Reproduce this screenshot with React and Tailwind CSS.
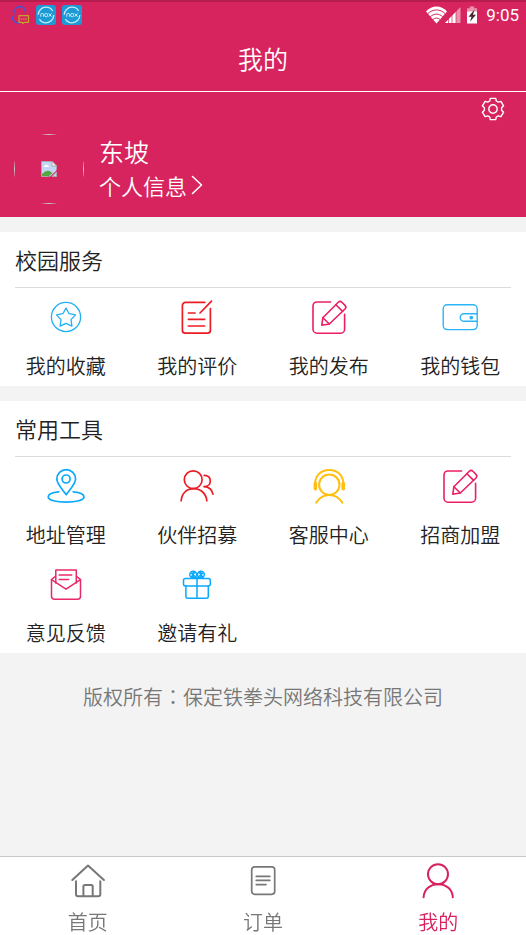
import React, { useState } from "react";

const line = {
    fill: "none",
    stroke: "currentColor",
    strokeLinecap: "round",
    strokeLinejoin: "round",
}

const Icon = ({ width = 1.6, children }) => (
    <svg viewBox="0 0 40 40" className="size-10" aria-hidden="true" {...line} strokeWidth={width}>{children}</svg>
)

const StarIcon = () => (
    <Icon width={1.3}>
        <circle cx="20" cy="20" r="14.6" />
        <path d="M20 11l3.1 5.7 6.4 1.2-4.5 4.7.9 6.5-5.9-2.8-5.9 2.8.9-6.5-4.5-4.7 6.4-1.2z" />
    </Icon>
)

const ReviewIcon = () => (
    <Icon width={1.7}>
        <path d="M27.8 5.4H8.4a3 3 0 0 0-3 3v24.8a3 3 0 0 0 3 3h22a3 3 0 0 0 3-3V11.6" />
        <path d="M34.5 4.2L23 16M11.4 16H18M11.4 22.3h16.2M11.4 29h16.2" />
    </Icon>
)

const EditIcon = () => (
    <Icon>
        <path d="M21.6 5H8a4 4 0 0 0-4 4v23.2a4 4 0 0 0 4 4h23.6a4 4 0 0 0 4-4V17.4" />
        <path d="M12.8 28.2l1.1-7.5L29.3 5.3q1.8-1.8 3.6 0l3.1 3.1q1.8 1.8 0 3.6L20.3 27z" />
        <path d="M13.9 20.7l6.4 6.3M26.9 7.7l6.7 6.7" />
    </Icon>
)

const WalletIcon = () => (
    <Icon width={1.4}>
        <rect x="3.2" y="7.8" width="34" height="24.8" rx="4" />
        <path d="M37.2 16.7H24a3.8 3.8 0 0 0 0 7.6h13.2" />
        <circle cx="31.3" cy="20.6" r="1.2" fill="currentColor" />
    </Icon>
)

const AddressIcon = () => (
    <Icon width={1.7}>
        <path d="M20.2 28.7C17 24 10.8 18 10.8 13a9.4 9.4 0 0 1 18.8 0c0 5-6.2 11-9.4 15.7z" />
        <circle cx="20.1" cy="13" r="4" />
        <path d="M12.7 25.8C6 26.4 2.2 28.5 2.2 31c0 3.1 8 5.2 17.9 5.2S38 34.1 38 31c0-2.5-4-4.6-10.7-5.2" />
    </Icon>
)

const PartnerIcon = () => (
    <Icon width={1.7}>
        <circle cx="16.2" cy="13.7" r="8.9" />
        <path d="M4.2 34.8c.4-7.2 5.3-12.2 12.4-12.2s12.7 5 13.2 12.2" />
        <path d="M27.2 9.3c3.7.1 6.1 2.3 6.1 5.6s-2.5 5.7-6.3 5.8c4.9.3 8.1 3 9 7.4" />
    </Icon>
)

const ServiceIcon = () => (
    <Icon width={2}>
        <path d="M6 18.5C6 9.5 12 4 20.3 4s14.2 5.5 14.2 14.5" />
        <path d="M6.4 17.6v5.2M34.2 17.6v5.2" strokeWidth="3.6" />
        <circle cx="20.3" cy="18.7" r="10.2" />
        <path d="M7.2 36.6c3.2-4.7 7.8-7.5 13.1-7.5s9.9 2.8 13.1 7.5" />
    </Icon>
)

const FeedbackIcon = () => (
    <Icon width={1.5}>
        <path d="M9.8 19V5.9h20.5V19" />
        <path d="M9.5 12.2l-4 3.4v16.7a3 3 0 0 0 3 3h23a3 3 0 0 0 3-3V15.6l-4-3.4" />
        <path d="M5.5 15.6L20 25.2l14.5-9.6M13.2 11h12.5M13.2 15.6h9.4" />
    </Icon>
)

const GiftIcon = () => (
    <Icon width={1.5}>
        <rect x="6.5" y="14.5" width="26.8" height="7.4" rx="1.8" />
        <path d="M8.9 21.9v10.3a2 2 0 0 0 2 2h18.4a2 2 0 0 0 2-2V21.9M20 14.5v19.7" />
        <circle cx="16.2" cy="10.6" r="3.4" />
        <circle cx="23.9" cy="10.6" r="3.4" />
        <path d="M14.2 9l5.6 5M17.5 8.5l-3 4.5M25.9 9l-5.7 5M22.5 8.5l3 4.5M16.2 7.5v6M23.9 7.5v6" />
    </Icon>
)

const HomeIcon = () => (
    <Icon width={2}>
        <path d="M4.3 19L20 4.5 35.9 19" />
        <path d="M8 20.3v12.9a2 2 0 0 0 2 2h20.3a2 2 0 0 0 2-2V20.3" />
        <path d="M15.4 35v-9.6a1.5 1.5 0 0 1 1.5-1.5h6.3a1.5 1.5 0 0 1 1.5 1.5V35" />
    </Icon>
)

const OrderIcon = () => (
    <Icon width={1.7}>
        <rect x="8.7" y="5.8" width="23" height="27.5" rx="3" />
        <path d="M13.3 15.4h13.5M13.3 19.4h13.5M13.3 23.6h9.7" />
    </Icon>
)

const UserIcon = () => (
    <Icon width={2}>
        <circle cx="20" cy="13.2" r="10" />
        <path d="M5.6 36.2C6 28.5 12 23.2 20.2 23.2s14.2 5.3 14.6 13" />
    </Icon>
)

const GearIcon = () => (
    <svg viewBox="-12 -12 24 24" className="size-6" aria-hidden="true" {...line} strokeWidth="1.4">
        <path d="M-2.7-10.6h5.4l.6 2.6 2 1.14 2.6-.8 2.7 4.5-2 2.02v2.28l2 2.02-2.7 4.5-2.6-.8-2 1.14-.6 2.6h-5.4l-.6-2.6-2-1.14-2.6.8-2.7-4.5 2-2.02v-2.28l-2-2.02 2.7-4.5 2.6.8 2-1.14z" />
        <circle r="4.2" />
    </svg>
)

const QQIcon = () => (
    <svg viewBox="0 0 20 20" className="size-5" aria-hidden="true" {...line} strokeWidth="1.3">
        <path d="M4.5 16c-2.5-1-2.5-3.5-.8-6C3.5 4.5 6.5 1.5 10 1.5s5.6 3 5.6 7M4.5 16c.5 1.3 2 2 4 2" stroke="#3f57d8" />
        <path d="M9 10.7h9.5v6.6h-4l-1.7 1.3-.6-1.3H9z" stroke="#c4a02c" />
        <path d="M11.4 14h.1M13.8 14h.1M16.1 14h.1" stroke="#c4a02c" strokeWidth="1.5" />
    </svg>
)

const NoxIcon = () => (
    <svg viewBox="0 0 20 20" className="size-5" aria-hidden="true">
        <rect width="20" height="20" rx="3" fill="#1b9ad6" />
        <circle cx="10" cy="10" r="7.8" fill="none" stroke="#c5ebfa" strokeWidth="1.3" strokeDasharray="20 4.5" />
        <path d="M4.8 11.7V9.5q0-1 1-1h.8q1 0 1 1v2.2M12.7 8.5l2.8 3.2M15.5 8.5l-2.8 3.2" fill="none" stroke="#fff" strokeWidth=".8" />
        <rect x="8.8" y="8.5" width="2.7" height="3.2" rx="1" fill="none" stroke="#fff" strokeWidth=".8" />
    </svg>
)

const SignalIcons = () => (
    <svg viewBox="0 0 54 20" className="h-5 w-[54px]" aria-hidden="true">
        <path d="M0 6.5C6-.2 15-.2 21 6.500L10.5 18.5z" fill="#fff" />
        <path d="M1.8 8.700c5-5 12.4-5 17.4 0M4.3 11.7c3.6-3.4 8.8-3.4 12.4 0M6.9 14.5c2.2-1.9 5-1.9 7.2 0" fill="none" stroke="#d7245e" />
        <path d="M19 18l15.5-16v16z" fill="#e992ae" />
        <path d="M19 18l11-11.3V18z" fill="#fff" />
        <path d="M22.5 12v6M26 8v10M30 5v13" stroke="#d7245e" strokeWidth=".7" />
        <path d="M41 3.2h2.8V1.5h4.4v1.7H51V7H41z" fill="#e992ae" />
        <path d="M41 6.5h10v12H41z" fill="#fff" />
        <path d="M48.5 4.5l-6 7.2h3l-1.5 5 6-7h-3z" fill="#4a2734" />
    </svg>
)

const BrokenImage = () => (
    <svg viewBox="0 0 16 16" className="size-4" role="img" aria-label="头像">
        <path d="M.5.5H11L15.5 5v4.5L9 15.5H.5z" fill="#c3d6f5" />
        <path d="M2.5 6q.3-1.5 1.7-1.5Q5.2 2.5 6.7 4.2 8 4.5 8 6z" fill="#fff" />
        <path d="M1 15.5V13q4.500-4.500 7.500-3l3 2-4 3.500z" fill="#53a93f" />
        <path d="M7 15.5H.5V.5H11L15.5 5v3" fill="none" stroke="#a9a9a9" />
        <path d="M11 .5V5h4.5z" fill="#fff" stroke="#a9a9a9" />
        <path d="M15.5 11v4.5H11z" fill="#c3d6f5" stroke="#a9a9a9" />
    </svg>
)

const campus = [
    { name: "我的收藏", icon: StarIcon, color: "text-[#1fb0f5]" },
    { name: "我的评价", icon: ReviewIcon, color: "text-[#ec1c24]" },
    { name: "我的发布", icon: EditIcon, color: "text-[#ec1e66]" },
    { name: "我的钱包", icon: WalletIcon, color: "text-[#2bb5f6]" },
]

const tools = [
    { name: "地址管理", icon: AddressIcon, color: "text-[#0aa9fb]" },
    { name: "伙伴招募", icon: PartnerIcon, color: "text-[#ec1c24]" },
    { name: "客服中心", icon: ServiceIcon, color: "text-[#ffbf0f]" },
    { name: "招商加盟", icon: EditIcon, color: "text-[#ec1e66]" },
    { name: "意见反馈", icon: FeedbackIcon, color: "text-[#ea2a68]" },
    { name: "邀请有礼", icon: GiftIcon, color: "text-[#0aa9fb]" },
]

const tabs = [
    { name: "首页", icon: HomeIcon },
    { name: "订单", icon: OrderIcon },
    { name: "我的", icon: UserIcon },
]

const Section = ({ title, items }) => (
    <section className="mt-[15px] bg-white">
        <h2 className="mx-[15px] h-14 border-b border-[#dcdcdc] text-[22px] leading-[54px] font-[350]">{title}</h2>
        <div className="grid grid-cols-4">
            {
                items.map(({ name, icon: ItemIcon, color }) => (
                    <a key={name} href="#" className="flex flex-col items-center pt-[9px] pb-2">
                        <span className={color}><ItemIcon /></span>
                        <span className="mt-[17px] text-[20px] leading-6">{name}</span>
                    </a>
                ))
            }
        </div>
    </section>
)

const App = () => {

    const [tab, setTab] = useState("我的")

    return (
        <div className="flex min-h-screen flex-col bg-[#f3f3f3] font-['Noto_Sans_CJK_SC',sans-serif] font-[350] text-[#222]">
            <header className="border-b border-white bg-[#d7245e] text-white">
                <div className="flex h-7 items-center justify-between border-t-2 border-[#b51d4e] pr-[7px] pl-[10px]">
                    <div className="flex items-center gap-[6px]">
                        <QQIcon />
                        <NoxIcon />
                        <NoxIcon />
                    </div>
                    <div className="flex items-center gap-[6px]">
                        <SignalIcons />
                        <span className="font-[Roboto,sans-serif] text-[17px] leading-6 font-normal">9:05</span>
                    </div>
                </div>
                <h1 className="h-[63px] text-center text-[25px] leading-[61px] font-[350]">我的</h1>
            </header>

            <div className="bg-[#d7245e] pb-[13px] text-white">
                <div className="flex h-[42px] justify-end pt-[5px] pr-[21px]">
                    <button type="button" aria-label="设置" className="size-6"><GearIcon /></button>
                </div>
                <div className="flex items-center gap-[15px] px-[14px]">
                    <div className="size-[70px] overflow-hidden rounded-full">
                        <div className="flex size-full items-center justify-center border border-[#c8c8c8]">
                            <BrokenImage />
                        </div>
                    </div>
                    <div className="pb-[2px]">
                        <p className="text-[25px] leading-[34px]">东坡</p>
                        <a href="#" className="flex items-center gap-1 text-[22px] leading-[34px]">
                            个人信息
                            <svg viewBox="0 0 12 20" className="h-5 w-3" aria-hidden="true" {...line} strokeWidth="1.6">
                                <path d="M1.5 1.5l9 8.5-9 8.5" />
                            </svg>
                        </a>
                    </div>
                </div>
            </div>

            <Section title="校园服务" items={campus} />
            <Section title="常用工具" items={tools} />

            <p className="py-7 text-center text-[20px] leading-8 text-[#777]">
                版权所有<span className="font-['Noto_Sans_CJK_TC',sans-serif]">：</span>保定铁拳头网络科技有限公司
            </p>

            <nav className="sticky bottom-0 mt-auto grid grid-cols-3 border-t border-[#c8c8c8] bg-white">
                {
                    tabs.map(({ name, icon: TabIcon }) => (
                        <button
                            key={name}
                            type="button"
                            onClick={() => setTab(name)}
                            className={"flex flex-col items-center pt-1 pb-px " + (tab === name ? "text-[#d81f5f]" : "text-[#777]")}
                        >
                            <TabIcon />
                            <span className="mt-[9px] text-[20px] leading-6">{name}</span>
                        </button>
                    ))
                }
            </nav>
        </div>
    )
}

export default App
